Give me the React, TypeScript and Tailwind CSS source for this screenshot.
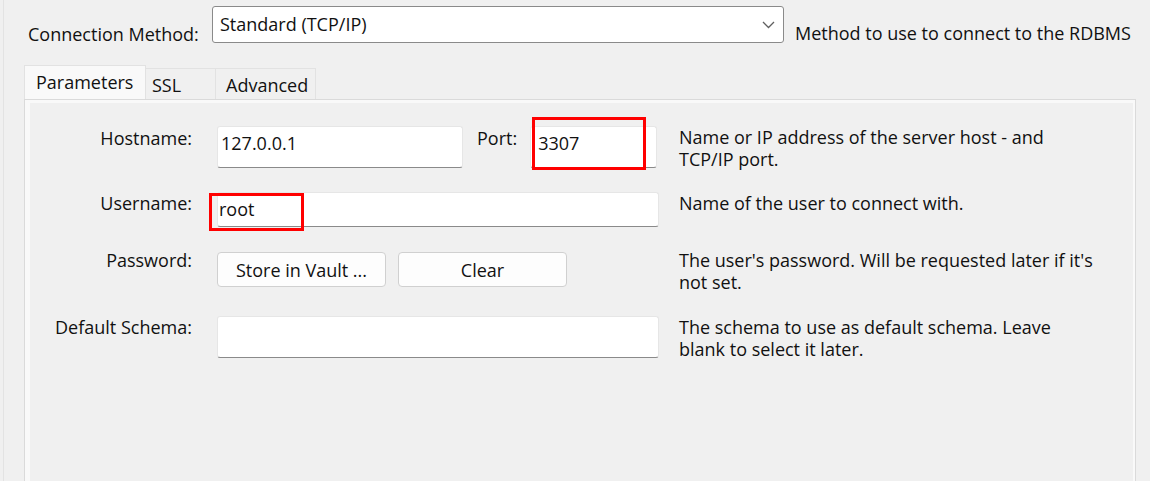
import React from 'react';

const font = { fontFamily: '"Open Sans", "Liberation Sans", sans-serif' };

const TextBox = ({ value, className }: { value?: string; className?: string }) => (
  <div
    className={`bg-white border border-[#e6e6e6] border-b-[#8a8a8a] rounded-[3px] text-[18px] leading-[22px] text-[#111] ${className ?? ''}`}
  >
    {value}
  </div>
);

const Label = ({ children }: { children: React.ReactNode }) => (
  <div className="w-[162px] shrink-0 text-right text-[18px] leading-[22px] text-[#111] whitespace-nowrap">{children}</div>
);

const Desc = ({ children }: { children: React.ReactNode }) => (
  <div className="ml-[20px] text-[18px] leading-[22px] text-[#111] whitespace-nowrap">{children}</div>
);

export default function App() {
  return (
    <div className="w-[1150px] h-[481px] bg-[#f0f0f0] overflow-hidden pl-[3px]" style={font}>
      <div className="h-full border-l border-[#e3e3e3] flex flex-col pt-[6px]">
        {/* connection method */}
        <div className="flex items-start h-[44px]">
          <div className="w-[208px] shrink-0 pl-[24px] pt-[17px] text-[18px] leading-[22px] text-[#111] whitespace-nowrap">
            Connection Method:
          </div>
          <div className="w-[572px] h-[37px] bg-white border border-[#8a8a8a] rounded-[3px] flex items-center justify-between pl-[7px] pr-[8px]">
            <span className="text-[18px] leading-[22px] text-[#111] -mt-[2px]">Standard (TCP/IP)</span>
            <svg width="13" height="8" viewBox="0 0 13 8" fill="none" stroke="#5f5f5f" strokeWidth="1.3">
              <path d="M1 1l5.5 5.5L12 1" />
            </svg>
          </div>
          <div className="ml-[11px] pt-[16px] text-[18px] leading-[22px] text-[#111] whitespace-nowrap">
            Method to use to connect to the RDBMS
          </div>
        </div>

        {/* tabs */}
        <div className="flex items-end ml-[20px] mt-[20px] h-[34px]">
          <div className="w-[122px] h-[34px] bg-[#f9f9f9] border border-b-0 border-[#e2e2e2] pl-[11px] pt-[5px] text-[18px] leading-[22px] text-[#111]">
            Parameters
          </div>
          <div className="w-[70px] h-[31px] border border-b-0 border-l-0 border-[#e2e2e2] pl-[6px] pt-[5px] text-[18px] leading-[22px] text-[#111]">
            SSL
          </div>
          <div className="w-[100px] h-[31px] border border-b-0 border-l-0 border-[#e2e2e2] pl-[10px] pt-[5px] text-[18px] leading-[22px] text-[#111]">
            Advanced
          </div>
        </div>

        {/* panel */}
        <div className="ml-[20px] w-[1112px] h-[420px] shrink-0 border border-[#dadada] bg-[#f9f9f9] p-[5px] pt-[3px] pr-[2px]">
          <div className="h-full bg-[#f0f0f0] pt-[23px] flex flex-col">
            {/* hostname + port */}
            <div className="flex items-start">
              <div className="pt-[1px]"><Label>Hostname:</Label></div>
              <div className="ml-[25px] w-[442px] flex items-start">
                <TextBox value="127.0.0.1" className="w-[246px] h-[42px] pl-[3px] pt-[5px]" />
                <div className="ml-[14px] pt-[1px] text-[18px] leading-[22px] text-[#111]">Port:</div>
                <div className="relative ml-[13px]">
                  <TextBox value="3307" className="w-[127px] h-[42px] pl-[7px] pt-[5px]" />
                  <div className="absolute -top-[9px] left-[2px] w-[114px] h-[53px] border-[3px] border-[#ff0000]" />
                </div>
              </div>
              <Desc>
                Name or IP address of the server host - and
                <br />
                TCP/IP port.
              </Desc>
            </div>

            {/* username */}
            <div className="flex items-start mt-[22px]">
              <Label>Username:</Label>
              <div className="ml-[25px] relative">
                <TextBox value="root" className="w-[442px] h-[35px] pl-[1px] pt-[5px]" />
                <div className="absolute top-[1px] -left-[8px] w-[95px] h-[38px] border-[3px] border-[#ff0000]" />
              </div>
              <Desc>Name of the user to connect with.</Desc>
            </div>

            {/* password */}
            <div className="flex items-start mt-[25px]">
              <div className="-mt-[3px]"><Label>Password:</Label></div>
              <div className="ml-[25px] w-[442px] flex gap-[12px]">
                <button className="w-[169px] h-[35px] bg-[#fdfdfd] border border-[#d0d0d0] rounded-[4px] text-[18px] leading-[22px] text-[#111]">
                  Store in Vault ...
                </button>
                <button className="w-[169px] h-[35px] bg-[#fdfdfd] border border-[#d0d0d0] rounded-[4px] text-[18px] leading-[22px] text-[#111]">
                  Clear
                </button>
              </div>
              <div className="-mt-[3px]">
                <Desc>
                  The user's password. Will be requested later if it's
                  <br />
                  not set.
                </Desc>
              </div>
            </div>

            {/* default schema */}
            <div className="flex items-start mt-[23px]">
              <Label>Default Schema:</Label>
              <div className="ml-[25px]">
                <TextBox className="w-[442px] h-[42px]" />
              </div>
              <Desc>
                The schema to use as default schema. Leave
                <br />
                blank to select it later.
              </Desc>
            </div>
          </div>
        </div>
      </div>
    </div>
  );
}
